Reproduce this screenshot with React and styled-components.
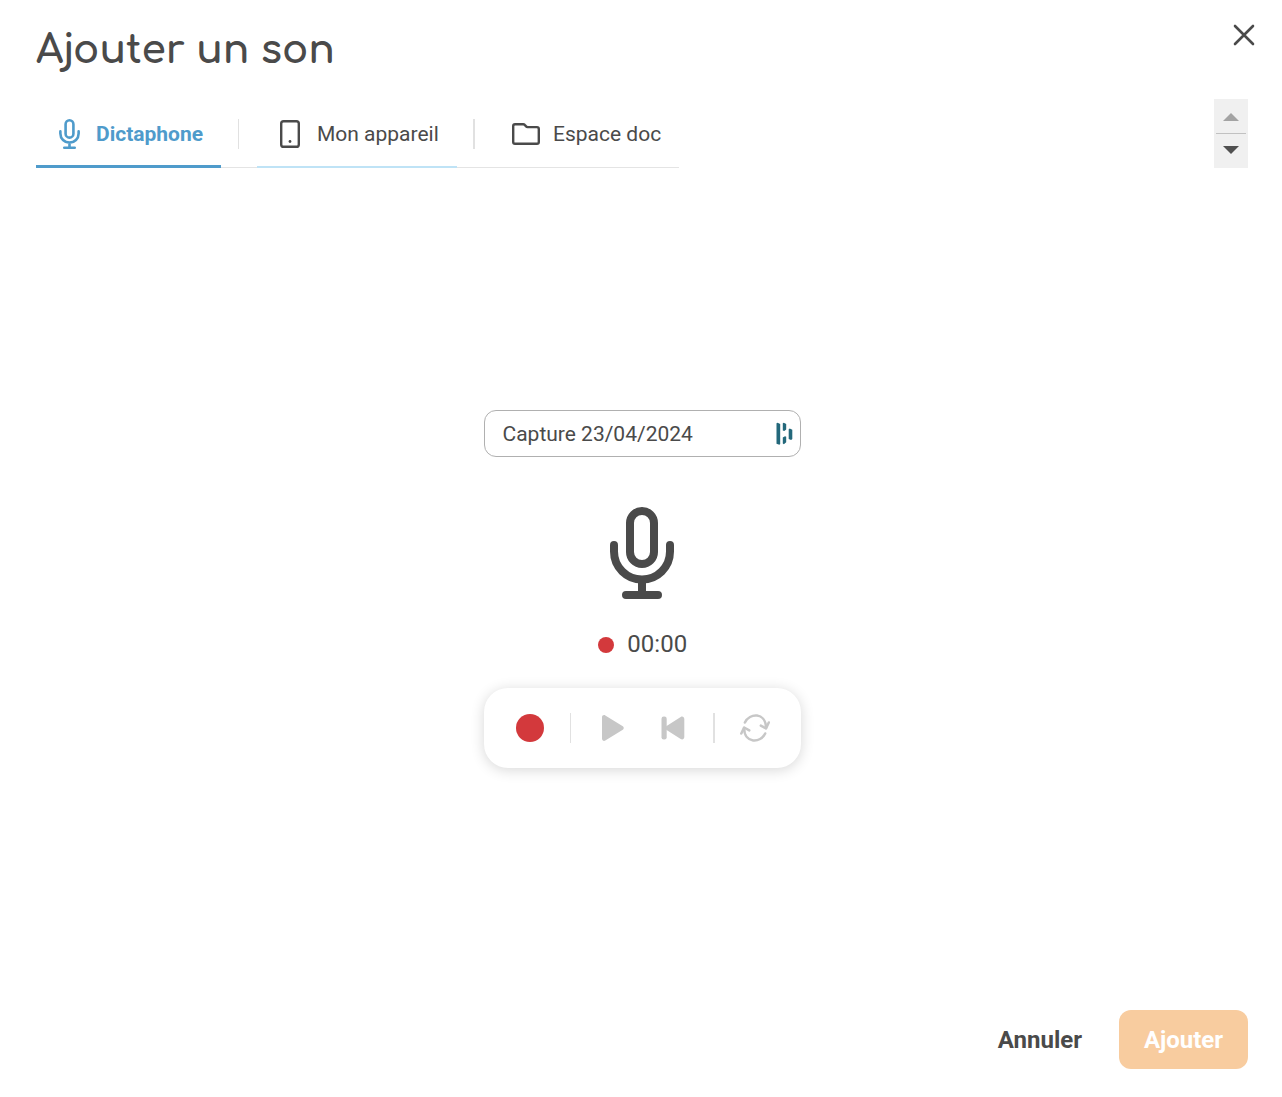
import React, { useState } from "react";
import styled, { createGlobalStyle } from "styled-components";

const GlobalStyle = createGlobalStyle`
  * {
    box-sizing: border-box;
  }

  body {
    margin: 0;
    background-color: #fff;
    color: #4a4a4a;
    font-family: Roboto, sans-serif;
  }

  button {
    padding: 0;
    border: none;
    background: none;
    color: inherit;
    font-family: inherit;
    cursor: pointer;
  }

  svg {
    display: block;
    flex-shrink: 0;
  }
`;

const MicIcon = ({ width, height }) => (
  <svg width={width} height={height} viewBox="0 0 64 92" fill="none" stroke="currentColor" strokeWidth="8" strokeLinecap="round">
    <rect x="20" y="4" width="24" height="53" rx="12" />
    <path d="M4 38v6.5a28 28 0 0 0 56 0V38M32 73v14M16 88h32" />
  </svg>
);

const DeviceIcon = () => (
  <svg width="20" height="28" viewBox="0 0 20 28" fill="none" stroke="currentColor" strokeWidth="2.4">
    <rect x="1.2" y="1.2" width="17.6" height="25.6" rx="2.4" />
    <circle cx="10" cy="21.5" r="1.4" fill="currentColor" stroke="none" />
  </svg>
);

const FolderIcon = () => (
  <svg width="28" height="22" viewBox="0 0 28 22" fill="none" stroke="currentColor" strokeWidth="2.4" strokeLinejoin="round">
    <path d="M1.2 3A1.8 1.8 0 0 1 3 1.2h8.2a2 2 0 0 1 1.5.7l1.4 1.5a2 2 0 0 0 1.5.7H25a1.8 1.8 0 0 1 1.8 1.8V19a1.8 1.8 0 0 1-1.8 1.8H3A1.8 1.8 0 0 1 1.2 19z" />
  </svg>
);

const CloseIcon = () => (
  <svg width="22" height="22" viewBox="0 0 22 22" fill="none" stroke="currentColor" strokeWidth="2.6" strokeLinecap="round">
    <path d="M2 2l18 18M20 2L2 20" />
  </svg>
);

const PlayIcon = () => (
  <svg width="22" height="26" viewBox="0 0 22 26" fill="currentColor">
    <path d="M0 2.2C0 .5 1.8-.5 3.3.4L20.8 11.3a2 2 0 0 1 0 3.4L3.3 25.6C1.8 26.5 0 25.5 0 23.8z" />
  </svg>
);

const RewindIcon = () => (
  <svg width="24" height="24" viewBox="0 0 24 24" fill="currentColor">
    <rect x="0.5" y="0.5" width="5.2" height="23" rx="2.3" />
    <path d="M23.3 2.9v18.2c0 2-2 3-3.6 1.9L5.2 13.8a2 2 0 0 1 0-3.6L19.7 1c1.600-1.100 3.600-.1 3.600 1.900z" />
  </svg>
);

const ResetIcon = () => (
  <svg width="30" height="28" viewBox="0 0 30 28" fill="none" stroke="currentColor" strokeWidth="2.5" strokeLinecap="round" strokeLinejoin="round">
    <path d="M4.9 8.5C9.3-1.2 25.8-2 26 14M25.2 19.5C20.8 29.2 4.3 30 4.100 14" />
    <path d="M20.8 11.6l5.2 2.9 2.8-6M9.3 16.4L4.1 13.5l-2.8 6" />
  </svg>
);

const ExtensionIcon = () => (
  <svg width="17" height="24" viewBox="0 0 17 24" fill="#23687b">
    <path d="M.5 1.3L1.600.8l2.600 1.100v20l-.8.9-2.900-1zM6.800 1.200l1-.4 2.400 1.200v5.400L8.300 9 6.800 8.400zM6.800 15.600l2.200-1.400 1.200.5v5.500l-2.300 2-1.100-.6zM12.700 7.300l1.100-.7 2.500 1.100V17l-1.200 1-2.400-1z" />
  </svg>
);

const TABS = [
  { id: "dictaphone", label: "Dictaphone", width: 185, padding: 22.5, gap: 16.5, icon: <MicIcon width={21} height={30} /> },
  { id: "device", label: "Mon appareil", width: 200, padding: 23, gap: 17, icon: <DeviceIcon />, hovered: true },
  { id: "docs", label: "Espace doc", width: 186, padding: 19, gap: 13, icon: <FolderIcon /> },
];

export default function App() {
  const [activeTab, setActiveTab] = useState("dictaphone");
  const [name, setName] = useState("Capture 23/04/2024");

  return (
    <Modal>
      <GlobalStyle />
      <Header>
        <Title>Ajouter un son</Title>
        <CloseButton type="button" aria-label="Fermer"><CloseIcon /></CloseButton>
      </Header>
      <TabBar>
        <TabList>
          {TABS.map((tab, index) => (
            <React.Fragment key={tab.id}>
              {index > 0 && <TabGap $thick={index === 2}><Separator $thick={index === 2} /></TabGap>}
              <Tab
                type="button"
                $width={tab.width}
                $padding={tab.padding}
                $gap={tab.gap}
                $active={activeTab === tab.id}
                $hovered={tab.hovered}
                onClick={() => setActiveTab(tab.id)}
              >
                {tab.icon}
                {tab.label}
              </Tab>
            </React.Fragment>
          ))}
        </TabList>
        <Scroller>
          <Arrow $up />
          <ScrollerLine />
          <Arrow />
        </Scroller>
      </TabBar>
      <Recorder>
        <NameField>
          <NameInput value={name} onChange={(e) => setName(e.target.value)} />
          <ExtensionIcon />
        </NameField>
        <MicWrapper><MicIcon width={64} height={92} /></MicWrapper>
        <Timer>
          <TimerDot $size={16.5} />
          <span>00:00</span>
        </Timer>
        <Controls>
          <Control type="button" aria-label="Enregistrer"><Dot $size={28} /></Control>
          <ControlSeparator />
          <Control type="button" disabled aria-label="Lire"><PlayIcon /></Control>
          <Control type="button" disabled aria-label="Début"><RewindIcon /></Control>
          <ControlSeparator $thick />
          <Control type="button" disabled aria-label="Recommencer"><ResetIcon /></Control>
        </Controls>
      </Recorder>
      <Footer>
        <CancelButton type="button">Annuler</CancelButton>
        <SubmitButton type="button">Ajouter</SubmitButton>
      </Footer>
    </Modal>
  );
}

const Modal = styled.div`
  display: flex;
  flex-direction: column;
  width: 100%;
  height: 1097px;
  padding: 24px 34px 28px 36px;
  background-color: #fff;
`;

const Header = styled.header`
  display: flex;
  justify-content: space-between;
  height: 75px;
  margin-right: -7px;
`;

const Title = styled.h2`
  margin: 2px 0 0;
  font-family: Comfortaa, Lato, sans-serif;
  font-size: 39px;
  font-weight: 700;
  line-height: 50px;
`;

const CloseButton = styled.button`
  width: 22px;
  height: 22px;
`;

const TabBar = styled.div`
  display: flex;
  justify-content: space-between;
  height: 69px;
`;

const TabList = styled.nav`
  display: flex;
  box-shadow: inset 0 -1px #e4e4e4;
`;

const Tab = styled.button`
  display: flex;
  align-items: center;
  gap: ${(props) => props.$gap}px;
  width: ${(props) => props.$width}px;
  padding-left: ${(props) => props.$padding}px;
  font-size: 21px;
  font-weight: ${(props) => (props.$active ? 700 : 400)};
  color: ${(props) => (props.$active ? "#4f9bcb" : "#4a4a4a")};
  white-space: nowrap;
  box-shadow: ${(props) => {
    if (props.$active) return "inset 0 -3px #4f9bcb";
    return props.$hovered ? "inset 0 -2px #bfe3f6" : "none";
  }};
`;

const TabGap = styled.div`
  display: flex;
  align-items: center;
  width: 36px;
  padding: 1px 0 0 ${(props) => (props.$thick ? 16 : 17)}px;
`;

const Separator = styled.span`
  flex-shrink: 0;
  width: ${(props) => (props.$thick ? 2 : 1)}px;
  height: 30px;
  background-color: #e1e1e1;
`;

const ControlSeparator = styled(Separator)`
  margin: 0 ${(props) => (props.$thick ? 10 : 12)}px 0 10px;
`;

const Scroller = styled.div`
  display: flex;
  flex-direction: column;
  align-items: center;
  width: 34px;
  padding-top: 14px;
  background-color: #f0f0f0;
`;

const Arrow = styled.span`
  width: 16px;
  height: 8px;
  background-color: ${(props) => (props.$up ? "#a3a3a3" : "#505050")};
  clip-path: ${(props) => (props.$up ? "polygon(50% 0, 100% 100%, 0 100%)" : "polygon(0 0, 100% 0, 50% 100%)")};
`;

const ScrollerLine = styled.span`
  width: 30px;
  height: 1px;
  margin: 12px 0;
  background-color: #c1c1c1;
`;

const Recorder = styled.section`
  display: flex;
  flex: 1;
  flex-direction: column;
  align-items: center;
  padding: 242px 0 0 1px;
`;

const NameField = styled.label`
  display: flex;
  align-items: center;
  width: 317px;
  height: 47px;
  padding: 0 7px 0 17.5px;
  border: 1px solid #b0b0b0;
  border-radius: 12px;
`;

const NameInput = styled.input`
  flex: 1;
  min-width: 0;
  padding: 0;
  border: none;
  outline: none;
  background: none;
  color: #4a4a4a;
  font-family: inherit;
  font-size: 21px;
`;

const MicWrapper = styled.div`
  margin: 50px 1px 0 0;
`;

const Timer = styled.div`
  display: flex;
  align-items: center;
  gap: 13px;
  height: 30px;
  margin-top: 30px;
  font-size: 24px;
  line-height: 30px;
`;

const Dot = styled.span`
  display: block;
  width: ${(props) => props.$size}px;
  height: ${(props) => props.$size}px;
  border-radius: 50%;
  background-color: #d3393c;
`;

const TimerDot = styled(Dot)`
  margin-top: 1.5px;
`;

const Controls = styled.div`
  display: flex;
  align-items: center;
  width: 317px;
  height: 80px;
  margin-top: 29px;
  padding: 0 16px;
  border-radius: 24px;
  background-color: #fff;
  box-shadow: 0 2px 14px rgba(0, 0, 0, 0.16);
`;

const Control = styled.button`
  display: flex;
  flex-shrink: 0;
  align-items: center;
  justify-content: center;
  width: 60px;
  height: 60px;

  &:disabled {
    color: #c7c7c7;
    cursor: default;
  }
`;

const Footer = styled.footer`
  display: flex;
  justify-content: flex-end;
  height: 59px;
`;

const CancelButton = styled.button`
  padding: 0 37px;
  font-size: 24px;
  font-weight: 700;
`;

const SubmitButton = styled.button`
  width: 129px;
  border-radius: 12px;
  background-color: #f8cc9f;
  color: #fff;
  font-size: 24px;
  font-weight: 700;
`;
